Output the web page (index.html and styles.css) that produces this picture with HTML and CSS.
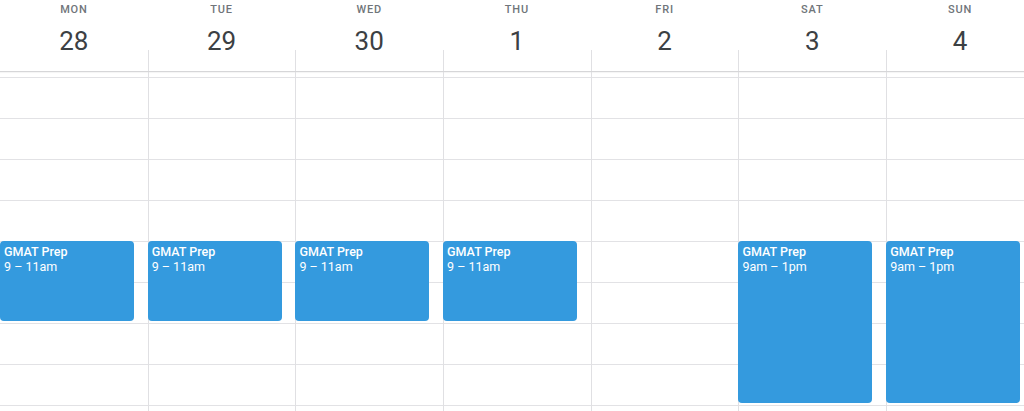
FILE: index.html
```html
<!DOCTYPE html>
<html lang="en">
<head>
<meta charset="utf-8">
<title>Week view</title>
<link rel="stylesheet" href="styles.css">
</head>
<body>
<div class="calendar">
  <div class="head">
    <div class="day"><div class="dow">MON</div><div class="date">28</div></div>
    <div class="day"><div class="dow">TUE</div><div class="date">29</div></div>
    <div class="day"><div class="dow">WED</div><div class="date">30</div></div>
    <div class="day"><div class="dow">THU</div><div class="date">1</div></div>
    <div class="day"><div class="dow">FRI</div><div class="date">2</div></div>
    <div class="day"><div class="dow">SAT</div><div class="date">3</div></div>
    <div class="day"><div class="dow">SUN</div><div class="date">4</div></div>
  </div>
  <div class="allday">
    <div class="ad-cell first"></div>
    <div class="ad-cell"></div>
    <div class="ad-cell"></div>
    <div class="ad-cell"></div>
    <div class="ad-cell"></div>
    <div class="ad-cell"></div>
    <div class="ad-cell"></div>
  </div>
  <div class="grid">
    <div class="hour r2"></div>
    <div class="hour r3"></div>
    <div class="hour r4"></div>
    <div class="hour r5"></div>
    <div class="hour r6"></div>
    <div class="hour r7"></div>
    <div class="hour r8"></div>
    <div class="hour r9"></div>
    <div class="hour r10"></div>

    <div class="col c1 first"></div>
    <div class="col c2"></div>
    <div class="col c3"></div>
    <div class="col c4"></div>
    <div class="col c5"></div>
    <div class="col c6"></div>
    <div class="col c7"></div>

    <div class="event c1 two"><div class="title">GMAT Prep</div><div class="time">9 – 11am</div></div>
    <div class="event c2 two"><div class="title">GMAT Prep</div><div class="time">9 – 11am</div></div>
    <div class="event c3 two"><div class="title">GMAT Prep</div><div class="time">9 – 11am</div></div>
    <div class="event c4 two"><div class="title">GMAT Prep</div><div class="time">9 – 11am</div></div>
    <div class="event c6 four"><div class="title">GMAT Prep</div><div class="time">9am – 1pm</div></div>
    <div class="event c7 four"><div class="title">GMAT Prep</div><div class="time">9am – 1pm</div></div>
  </div>
</div>
</body>
</html>
```

FILE: styles.css
```css
html, body {
  margin: 0;
  padding: 0;
  background: #ffffff;
  overflow: hidden;
}

body {
  width: 1024px;
  height: 411px;
  font-family: Roboto, "Liberation Sans", Arial, sans-serif;
}

.calendar {
  width: 1034px;
}

.head {
  display: grid;
  grid-template-columns: repeat(7, 147.7px);
  height: 50px;
}

.day {
  display: flex;
  flex-direction: column;
  align-items: center;
  height: 50px;
}

.dow {
  padding-top: 2px;
  font-size: 11px;
  line-height: 16px;
  font-weight: 500;
  letter-spacing: 0.8px;
  color: #70757a;
}

.date {
  margin-top: 12px;
  font-size: 26px;
  line-height: 22px;
  font-weight: 400;
  color: #3c4043;
}

.allday {
  display: grid;
  grid-template-columns: repeat(7, 147.7px);
  height: 21px;
  border-bottom: 1px solid #d6d6d8;
  box-shadow: 0 1px 1px rgba(0, 0, 0, 0.04);
}

.ad-cell {
  border-left: 1px solid #e0e0e3;
}

.ad-cell.first {
  border-left: none;
}

.grid {
  display: grid;
  grid-template-columns: repeat(7, 147.7px);
  grid-template-rows: 5px repeat(9, 41px);
  height: 339px;
  overflow: hidden;
}

.hour {
  grid-column: 1 / -1;
  border-top: 1px solid #e2e2e5;
}

.r2 { grid-row: 2; }
.r3 { grid-row: 3; }
.r4 { grid-row: 4; }
.r5 { grid-row: 5; }
.r6 { grid-row: 6; }
.r7 { grid-row: 7; }
.r8 { grid-row: 8; }
.r9 { grid-row: 9; }
.r10 { grid-row: 10; }

.col {
  grid-row: 1 / -1;
  border-left: 1px solid #e0e0e3;
}

.col.first {
  border-left: none;
}

.c1 { grid-column: 1; }
.c2 { grid-column: 2; }
.c3 { grid-column: 3; }
.c4 { grid-column: 4; }
.c5 { grid-column: 5; }
.c6 { grid-column: 6; }
.c7 { grid-column: 7; }

.event {
  z-index: 1;
  background: #349ade;
  border-radius: 4px;
  margin: 0 13.7px 2.5px 0;
  padding: 3px 4px 0;
  color: #ffffff;
  font-size: 12.5px;
  line-height: 15px;
  overflow: hidden;
}

.event.two { grid-row: 6 / span 2; }
.event.four { grid-row: 6 / span 4; }

.title {
  font-weight: 500;
}

.time {
  font-weight: 400;
}
```
